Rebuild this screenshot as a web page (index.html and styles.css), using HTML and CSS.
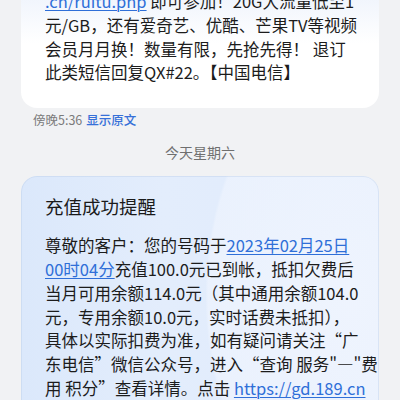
FILE: index.html
```html
<!DOCTYPE html>
<html lang="zh-CN">
<head>
<meta charset="utf-8">
<link rel="stylesheet" href="styles.css">
</head>
<body>
<div class="thread">
  <div class="bubble bubble-top">
    <p class="msg"><a class="link" href="#">.cn/ruitu.php</a> 即可参加！20G大流量低至1<br>元/GB，还有爱奇艺、优酷、芒果TV等视频<br>会员月月换！数量有限，先抢先得！ 退订<br>此类短信回复QX#22。【中国电信】</p>
  </div>
  <div class="meta"><span class="time">傍晚5:36</span><span class="orig">显示原文</span></div>
  <div class="day">今天星期六</div>
  <div class="bubble bubble-card">
    <h2 class="title">充值成功提醒</h2>
    <p class="msg">尊敬的客户：您的号码于<a class="link" href="#">2023年02月25日<br>00时04分</a>充值100.0元已到帐，抵扣欠费后<br>当月可用余额114.0元（其中通用余额104.0<br>元，专用余额10.0元，实时话费未抵扣），<br>具体以实际扣费为准，如有疑问请关注“广<br>东电信”微信公众号，进入“查询 服务"—"费<br>用 积分”查看详情。点击 <a class="link" href="#">https://gd.189.cn</a></p>
  </div>
</div>
</body>
</html>
```

FILE: styles.css
```css
html, body {
  margin: 0;
  padding: 0;
  background: #f1f2f4;
  font-family: "Noto Sans CJK SC", "Noto Sans", sans-serif;
  color: #1c1c1c;
  overflow: hidden;
}

.thread {
  display: flex;
  flex-direction: column;
  width: 400px;
  height: 400px;
}

.bubble {
  margin: 0 21px;
  border-radius: 16px;
  padding: 0 16px 0 24px;
}

.bubble-top {
  margin-top: -10px;
  padding-bottom: 23px;
  border-radius: 0 0 16px 16px;
  background: linear-gradient(180deg, #eef3fc 0%, #ffffff 45%);
}

.msg {
  margin: 0;
  font-size: 16.5px;
  line-height: 23.8px;
  white-space: nowrap;
}

.link {
  color: #2f6fd8;
  text-decoration: underline;
  text-decoration-thickness: 1px;
  text-underline-offset: 2px;
}

.meta {
  margin-top: 3px;
  padding-left: 33px;
  font-size: 12.5px;
  line-height: 18px;
  display: flex;
  gap: 4px;
}

.time {
  color: #7b7b7b;
}

.orig {
  color: #3670d8;
  font-weight: 500;
}

.day {
  margin-top: 13px;
  text-align: center;
  font-size: 14px;
  line-height: 20px;
  color: #6f6f6f;
}

.bubble-card {
  margin-top: 14px;
  padding-top: 17px;
  padding-bottom: 30px;
  box-shadow: inset 0 0 0 1px rgba(180, 200, 230, 0.35);
  background:
    radial-gradient(ellipse 260px 420px at 330px 120px, rgba(240, 245, 254, 0.9) 0%, rgba(240, 245, 254, 0.6) 55%, rgba(240, 245, 254, 0) 56%),
    linear-gradient(90deg, #dbe8fb 0%, #e3edfc 40%, #dfeafc 100%);
}

.title {
  margin: 0 0 15px;
  font-size: 18.5px;
  line-height: 26px;
  font-weight: 400;
  color: #1a1a1a;
}
```
